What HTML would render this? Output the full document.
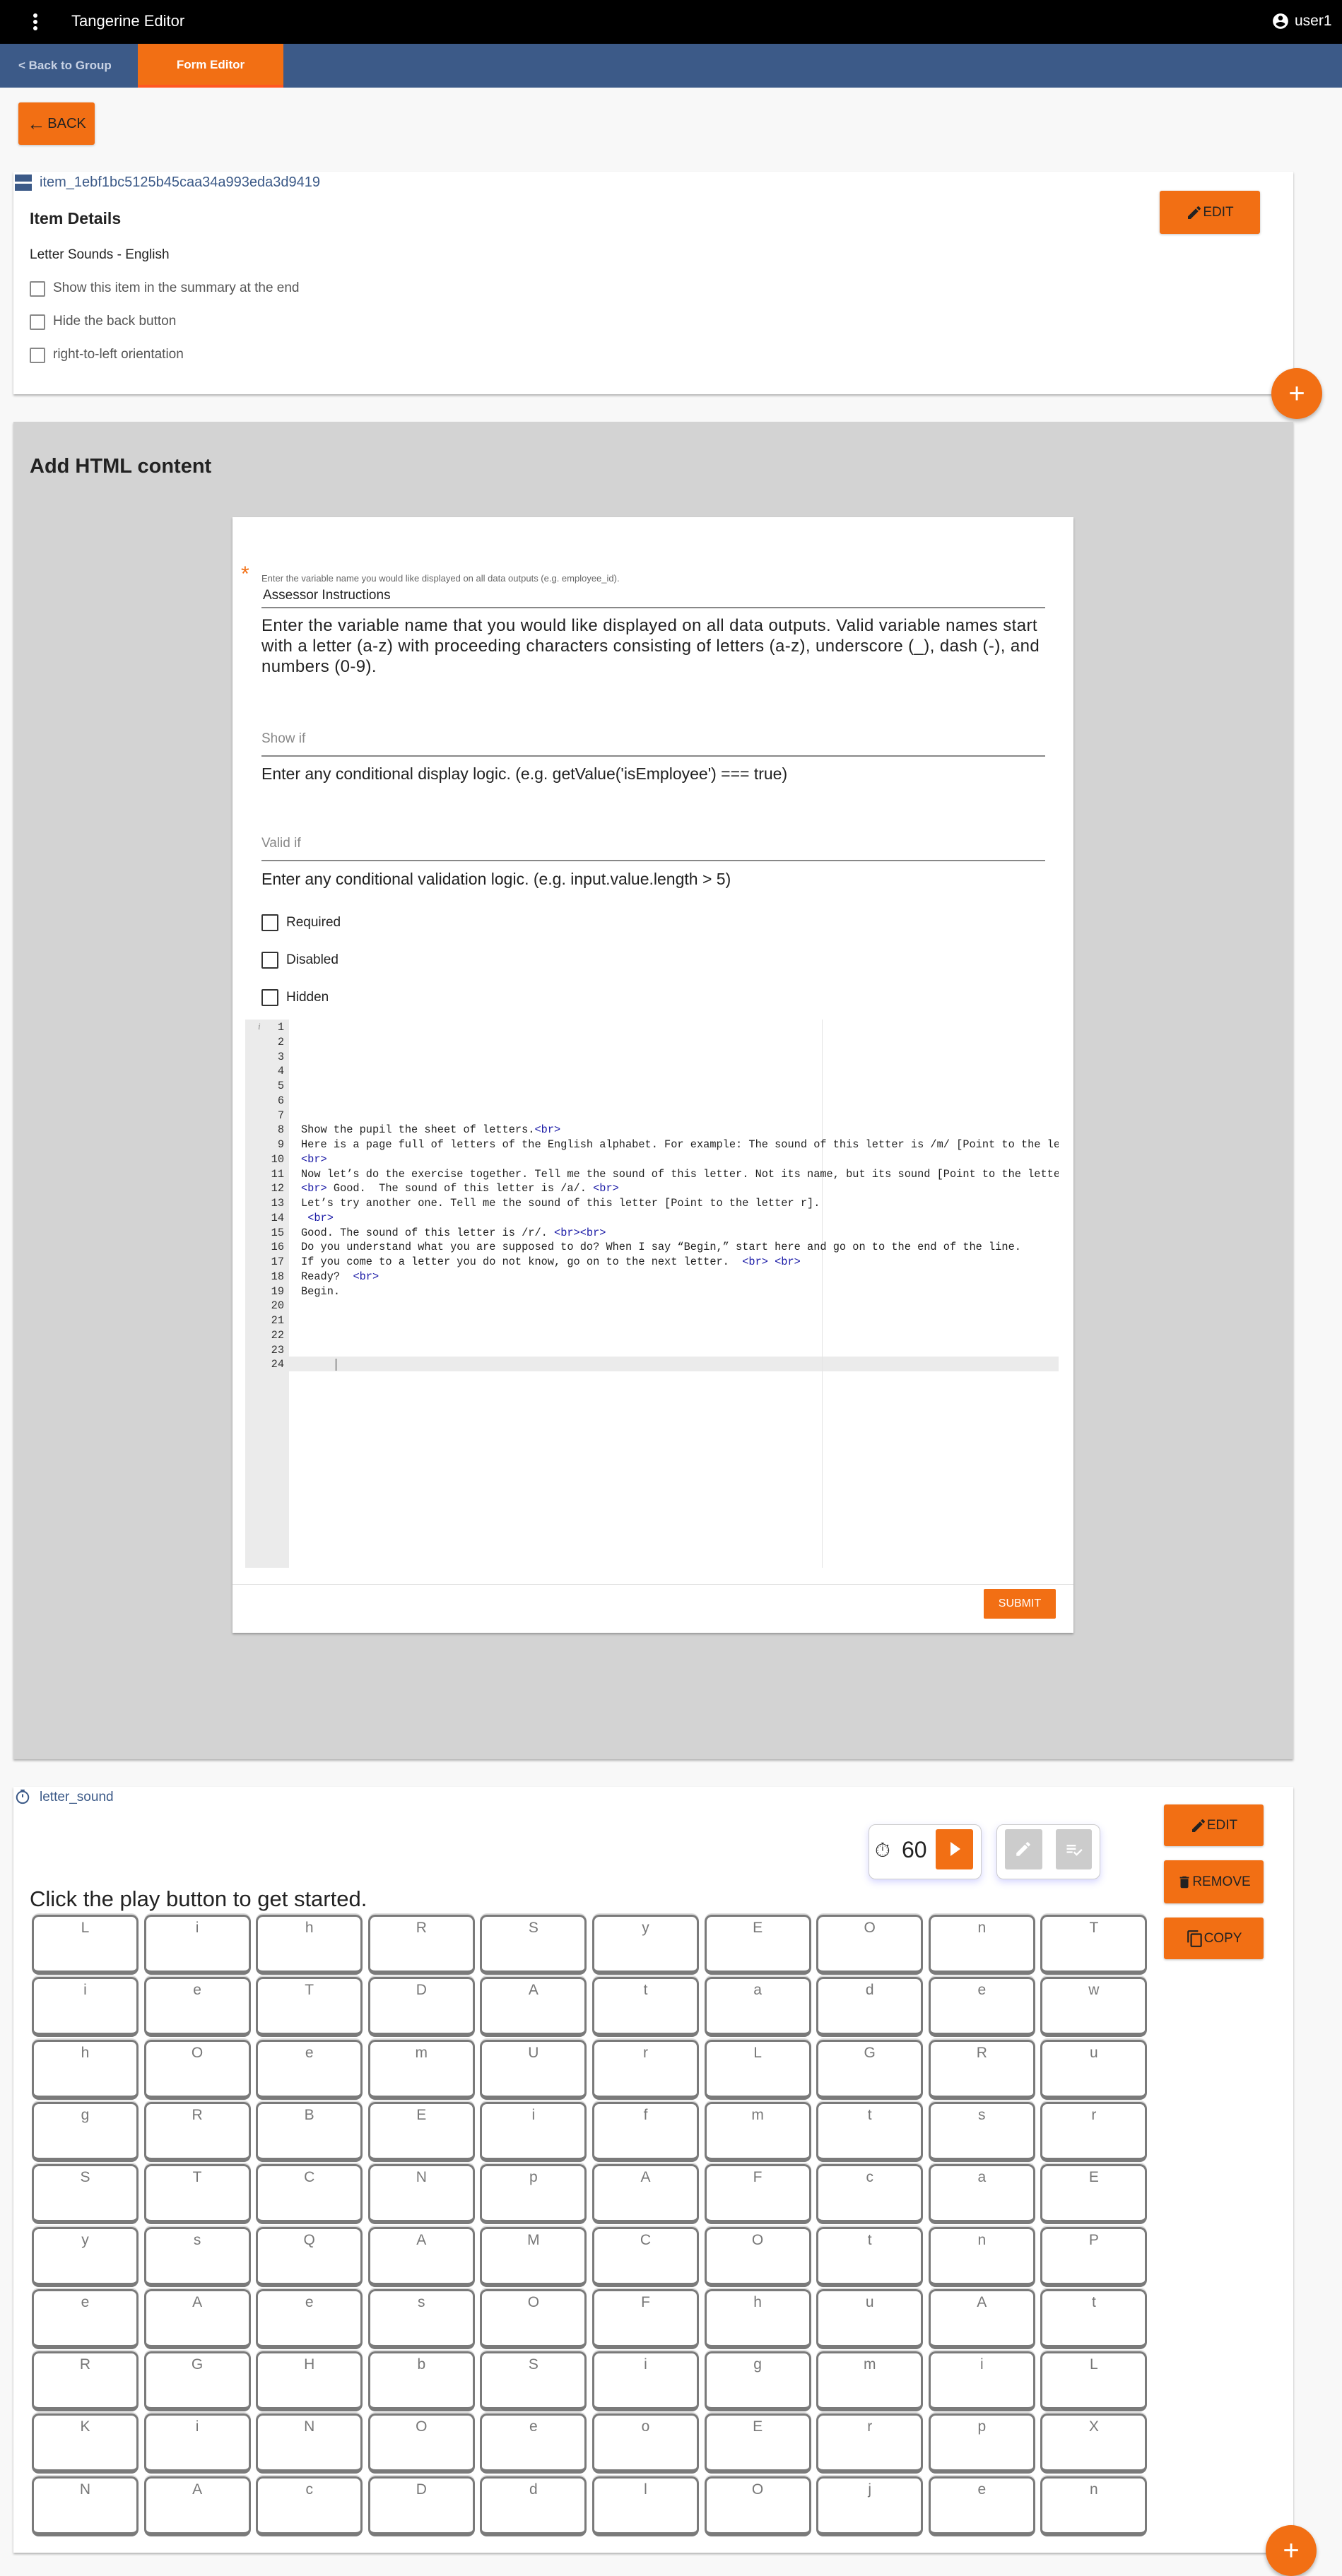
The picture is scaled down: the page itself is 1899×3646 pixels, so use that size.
<!DOCTYPE html>
<html><head><meta charset="utf-8">
<style>
*{box-sizing:border-box;margin:0;padding:0}
body{width:1899px;height:3631px;background:#f8f8f8;font-family:"Liberation Sans",sans-serif;position:relative;overflow:hidden;color:#222}
.abs{position:absolute}
.top{left:0;top:0;width:1899px;height:62px;background:#000;color:#fff}
.nav{left:0;top:62px;width:1899px;height:62px;background:#3c5a88}
.or{background:#f26f14}
.card{background:#fff;box-shadow:0 2px 3px rgba(0,0,0,.3)}
.btn{background:#f26f14;border-radius:3px;color:#222;font-size:19px;display:flex;align-items:center;justify-content:center;box-shadow:0 1px 3px rgba(0,0,0,.25)}
.cb{width:22px;height:22px;border:2px solid #888;border-radius:2px;background:#fff}
.cb2{width:24px;height:24px;border:2.5px solid #333;border-radius:2px}
.fab{width:72px;height:72px;border-radius:50%;background:#f26f14;color:#fff;font-size:40px;display:flex;align-items:center;justify-content:center;box-shadow:0 3px 6px rgba(0,0,0,.3)}
.code{font-family:"Liberation Mono",monospace;font-size:15.3px;line-height:20.75px;white-space:pre}
.tag{color:#1a1aa6}
.k{position:absolute;width:151px;height:85px;border:3px solid #7a7a7a;border-bottom-width:6px;border-radius:10px;background:#fff;text-align:center;color:#777;font-size:21px;padding-top:4px;box-shadow:0 -2px 0 #ddd}
</style></head><body>
<div class="abs top">
 <div class="abs" style="left:47px;top:19px;width:6px;height:6px;border-radius:3px;background:#fff;box-shadow:0 9px 0 #fff,0 18px 0 #fff"></div>
 <div class="abs" style="left:101px;top:17px;font-size:22px">Tangerine Editor</div>
 <svg class="abs" style="left:1799px;top:17px" width="26" height="26" viewBox="0 0 24 24"><path fill="#fff" d="M12 2C6.48 2 2 6.48 2 12s4.48 10 10 10 10-4.48 10-10S17.52 2 12 2zm0 3c1.66 0 3 1.34 3 3s-1.34 3-3 3-3-1.34-3-3 1.34-3 3-3zm0 14.2c-2.5 0-4.71-1.28-6-3.22.03-1.99 4-3.08 6-3.08 1.99 0 5.97 1.09 6 3.08-1.29 1.94-3.5 3.22-6 3.22z"/></svg>
 <div class="abs" style="left:1832px;top:18px;font-size:21px">user1</div>
</div>
<div class="abs nav">
 <div class="abs" style="left:26px;top:21px;color:#c8d2e4;font-size:17px;font-weight:bold">&lt; Back to Group</div>
 <div class="abs or" style="left:195px;top:0;width:206px;height:62px;border-bottom:4px solid #ff5722;color:#fff;font-size:17px;font-weight:bold;text-align:center;line-height:60px">Form Editor</div>
</div>
<div class="abs btn" style="left:26px;top:145px;width:108px;height:60px;font-size:20px"><span style="font-size:26px;margin-right:3px">&#8592;</span>BACK</div>

<div class="abs card" style="left:19px;top:243px;width:1811px;height:315px"></div>
<div class="abs" style="left:21px;top:247px;width:24px;height:10px;background:#3c5a88"></div>
<div class="abs" style="left:21px;top:260px;width:24px;height:10px;background:#3c5a88"></div>
<div class="abs" style="left:56px;top:247px;font-size:20px;color:#3c5a88">item_1ebf1bc5125b45caa34a993eda3d9419</div>
<div class="abs" style="left:42px;top:296px;font-size:23px;font-weight:bold">Item Details</div>
<div class="abs" style="left:42px;top:350px;font-size:19px">Letter Sounds - English</div>
<div class="abs cb" style="left:42px;top:398px"></div><div class="abs" style="left:75px;top:397px;font-size:19px;color:#555">Show this item in the summary at the end</div>
<div class="abs cb" style="left:42px;top:445px"></div><div class="abs" style="left:75px;top:444px;font-size:19px;color:#555">Hide the back button</div>
<div class="abs cb" style="left:42px;top:492px"></div><div class="abs" style="left:75px;top:491px;font-size:19px;color:#555">right-to-left orientation</div>
<div class="abs btn" style="left:1641px;top:270px;width:142px;height:61px"><svg width="24" height="24" viewBox="0 0 24 24"><path fill="#222" d="M3 17.25V21h3.75L17.81 9.940l-3.75-3.75L3 17.25zM20.71 7.04a1 1 0 0 0 0-1.41l-2.34-2.34a1 1 0 0 0-1.41 0l-1.83 1.83 3.75 3.75 1.83-1.83z"/></svg>EDIT</div>
<div class="abs fab" style="left:1799px;top:521px">+</div>

<div class="abs" style="left:19px;top:597px;width:1811px;height:1893px;background:#d3d3d3;box-shadow:0 2px 3px rgba(0,0,0,.3)"></div>
<div class="abs" style="left:42px;top:644px;font-size:29px;font-weight:bold">Add HTML content</div>
<div class="abs card" style="left:329px;top:732px;width:1190px;height:1579px"></div>
<div class="abs" style="left:341px;top:796px;font-size:30px;color:#f26f14">*</div>
<div class="abs" style="left:370px;top:811px;font-size:13px;color:#666">Enter the variable name you would like displayed on all data outputs (e.g. employee_id).</div>
<div class="abs" style="left:372px;top:832px;font-size:19px">Assessor Instructions</div>
<div class="abs" style="left:370px;top:859px;width:1109px;height:2px;background:#888"></div>
<div class="abs" style="left:370px;top:871px;font-size:24px;letter-spacing:0.4px;line-height:29px;white-space:nowrap">Enter the variable name that you would like displayed on all data outputs. Valid variable names start<br>with a letter (a-z) with proceeding characters consisting of letters (a-z), underscore (_), dash (-), and<br>numbers (0-9).</div>
<div class="abs" style="left:370px;top:1035px;font-size:19px;color:#888">Show if</div>
<div class="abs" style="left:370px;top:1069px;width:1109px;height:2px;background:#888"></div>
<div class="abs" style="left:370px;top:1082px;font-size:23px">Enter any conditional display logic. (e.g. getValue('isEmployee') === true)</div>
<div class="abs" style="left:370px;top:1183px;font-size:19px;color:#888">Valid if</div>
<div class="abs" style="left:370px;top:1217px;width:1109px;height:2px;background:#888"></div>
<div class="abs" style="left:370px;top:1231px;font-size:23px">Enter any conditional validation logic. (e.g. input.value.length &gt; 5)</div>
<div class="abs cb2" style="left:370px;top:1294px"></div><div class="abs" style="left:405px;top:1295px;font-size:19px">Required</div>
<div class="abs cb2" style="left:370px;top:1347px"></div><div class="abs" style="left:405px;top:1348px;font-size:19px">Disabled</div>
<div class="abs cb2" style="left:370px;top:1400px"></div><div class="abs" style="left:405px;top:1401px;font-size:19px">Hidden</div>

<div class="abs" style="left:347px;top:1443px;width:1151px;height:776px;background:#fff;overflow:hidden">
 <div class="abs" style="left:0;top:0;width:62px;height:776px;background:#ebebeb"></div>
 <div class="abs" style="left:0;top:477px;width:1151px;height:21px;background:#ebebeb"></div>
 <div class="abs" style="left:816px;top:0;width:1px;height:776px;background:#e4e4e4"></div>
 <div class="abs" style="left:18px;top:2px;font-size:13px;color:#888;font-style:italic;font-family:'Liberation Serif',serif">i</div>
 <div class="abs code" style="left:0;top:1px;width:55px;text-align:right;color:#333">1
2
3
4
5
6
7
8
9
10
11
12
13
14
15
16
17
18
19
20
21
22
23
24</div>
 <div class="abs" style="left:128px;top:480px;width:1px;height:17px;background:#333"></div>
 <div class="abs code" style="left:79px;top:1px;color:#222">






Show the pupil the sheet of letters.<span class="tag">&lt;br&gt;</span>
Here is a page full of letters of the English alphabet. For example: The sound of this letter is /m/ [Point to the letter m]
<span class="tag">&lt;br&gt;</span>
Now let’s do the exercise together. Tell me the sound of this letter. Not its name, but its sound [Point to the letter a]
<span class="tag">&lt;br&gt;</span> Good.  The sound of this letter is /a/. <span class="tag">&lt;br&gt;</span>
Let’s try another one. Tell me the sound of this letter [Point to the letter r].
 <span class="tag">&lt;br&gt;</span>
Good. The sound of this letter is /r/. <span class="tag">&lt;br&gt;&lt;br&gt;</span>
Do you understand what you are supposed to do? When I say “Begin,” start here and go on to the end of the line.
If you come to a letter you do not know, go on to the next letter.  <span class="tag">&lt;br&gt;</span> <span class="tag">&lt;br&gt;</span>
Ready?  <span class="tag">&lt;br&gt;</span>
Begin.</div>
</div>
<div class="abs" style="left:329px;top:2242px;width:1190px;height:1px;background:#e0e0e0"></div>
<div class="abs" style="left:1392px;top:2249px;width:102px;height:42px;background:#f26f14;border-radius:2px;color:#fff;font-size:16px;text-align:center;line-height:42px">SUBMIT</div>

<div class="abs card" style="left:19px;top:2529px;width:1811px;height:1084px"></div>
<svg class="abs" style="left:21px;top:2532px" width="22" height="22" viewBox="0 0 24 24"><circle cx="12" cy="13" r="9" fill="none" stroke="#3c5a88" stroke-width="2.2"/><path d="M12 13V8M9 2h6" stroke="#3c5a88" stroke-width="2.2"/></svg>
<div class="abs" style="left:56px;top:2533px;font-size:19px;color:#3c5a88">letter_sound</div>
<div class="abs" style="left:1229px;top:2582px;width:160px;height:78px;border:1px solid #ccc;border-radius:10px;background:#fff;box-shadow:0 4px 10px rgba(90,90,255,.25)"></div>
<div class="abs" style="left:1238px;top:2603px;font-size:28px">⏱</div>
<div class="abs" style="left:1276px;top:2600px;font-size:32px">60</div>
<div class="abs" style="left:1324px;top:2589px;width:53px;height:57px;background:#f26f14;border-radius:3px"></div>
<div class="abs" style="left:1345px;top:2607px;width:0;height:0;border-left:14px solid #fff;border-top:10px solid transparent;border-bottom:10px solid transparent"></div>
<div class="abs" style="left:1410px;top:2582px;width:147px;height:78px;border:1px solid #ccc;border-radius:10px;background:#fff;box-shadow:0 4px 10px rgba(90,90,255,.25)"></div>
<div class="abs" style="left:1422px;top:2589px;width:53px;height:57px;background:#ccc;border-radius:3px"></div>
<svg class="abs" style="left:1435px;top:2604px" width="26" height="26" viewBox="0 0 24 24"><path fill="#fff" d="M3 17.25V21h3.75L17.81 9.94l-3.75-3.75L3 17.25zM20.71 7.04a1 1 0 0 0 0-1.41l-2.34-2.34a1 1 0 0 0-1.41 0l-1.83 1.83 3.75 3.75 1.83-1.83z"/></svg>
<div class="abs" style="left:1494px;top:2589px;width:51px;height:57px;background:#ccc;border-radius:3px"></div>
<svg class="abs" style="left:1506px;top:2604px" width="28" height="28" viewBox="0 0 24 24"><path fill="#fff" d="M3 6h11v2H3zm0 4h11v2H3zm0 4h7v2H3zm19-1.5-1.4-1.4-5.6 5.6-2.6-2.6-1.4 1.4 4 4z"/></svg>
<div class="abs btn" style="left:1647px;top:2554px;width:141px;height:59px"><svg width="24" height="24" viewBox="0 0 24 24"><path fill="#222" d="M3 17.25V21h3.75L17.81 9.94l-3.75-3.75L3 17.25zM20.71 7.04a1 1 0 0 0 0-1.41l-2.34-2.34a1 1 0 0 0-1.41 0l-1.83 1.83 3.75 3.75 1.83-1.83z"/></svg>EDIT</div>
<div class="abs btn" style="left:1647px;top:2633px;width:141px;height:61px"><svg width="22" height="26" viewBox="0 0 24 24"><path fill="#222" d="M6 19c0 1.1.9 2 2 2h8c1.1 0 2-.9 2-2V7H6v12zM19 4h-3.5l-1-1h-5l-1 1H5v2h14V4z"/></svg>REMOVE</div>
<div class="abs btn" style="left:1647px;top:2714px;width:141px;height:59px"><svg width="26" height="28" viewBox="0 0 24 24"><path fill="#222" d="M16 1H4c-1.1 0-2 .9-2 2v14h2V3h12V1zm3 4H8c-1.1 0-2 .9-2 2v14c0 1.1.9 2 2 2h11c1.1 0 2-.9 2-2V7c0-1.1-.9-2-2-2zm0 16H8V7h11v14z"/></svg>COPY</div>
<div class="abs" style="left:42px;top:2670px;font-size:31px">Click the play button to get started.</div>
<div id="g"></div>
<script>
var L=["LihRSyEOnT","ieTDAtadew","hOemUrLGRu","gRBEifmtsr","STCNpAFcaE","ysQAMCOtnP","eAesOFhuAt","RGHbSigmiL","KiNOeoErpX","NAcDdlOjen"];
var h="";for(var r=0;r<10;r++)for(var c=0;c<10;c++)h+='<div class="k" style="left:'+(45+c*158.6).toFixed(1)+'px;top:'+(2710+r*88.3).toFixed(1)+'px">'+L[r][c]+'</div>';
document.getElementById("g").innerHTML=h;
</script>
<div class="abs fab" style="left:1791px;top:3574px">+</div>
</body></html>
